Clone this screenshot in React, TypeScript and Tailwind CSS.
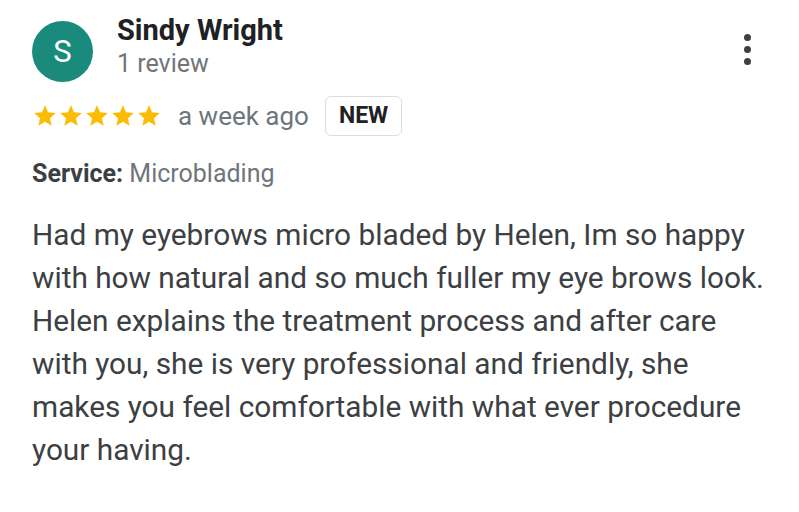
import React from 'react';

const Star: React.FC = () => (
  <svg viewBox="0 0 24 24" className="w-[26px] h-[26px]" fill="#fbbc04">
    <path d="M12 17.27L18.18 21l-1.64-7.03L22 9.24l-7.19-.61L12 2 9.19 8.63 2 9.24l5.46 4.73L5.82 21z" />
  </svg>
);

export default function App() {
  return (
    <div className="w-[799px] h-[512px] bg-white font-['Roboto',sans-serif] px-[32px] pt-[12px]">
      <div className="flex items-start">
        <div className="w-[61px] h-[61px] mt-[9px] rounded-full bg-[#1a8a7c] flex items-center justify-center text-white text-[31px] leading-none">
          S
        </div>
        <div className="ml-[24px] flex-1">
          <div className="text-[29px] font-bold text-[#202124] leading-[36px]">Sindy Wright</div>
          <div className="text-[25px] text-[#70757a] leading-[32px]">1 review</div>
        </div>
        <div className="flex flex-col gap-[5px] mt-[22px] mr-[16px]">
          <span className="w-[7px] h-[7px] rounded-full bg-[#3c4043]" />
          <span className="w-[7px] h-[7px] rounded-full bg-[#3c4043]" />
          <span className="w-[7px] h-[7px] rounded-full bg-[#3c4043]" />
        </div>
      </div>

      <div className="flex items-center mt-[14px]">
        <div className="flex">
          <Star /><Star /><Star /><Star /><Star />
        </div>
        <span className="ml-[16px] text-[26px] text-[#70757a]">a week ago</span>
        <span className="ml-[16px] border border-[#dadce0] rounded-[6px] px-[13px] h-[40px] flex items-center text-[23px] font-bold text-[#202124]">
          NEW
        </span>
      </div>

      <div className="mt-[22px] text-[25px] leading-[32px]">
        <span className="font-bold text-[#3c4043]">Service: </span>
        <span className="text-[#70757a]">Microblading</span>
      </div>

      <p className="mt-[23px] text-[29.8px] leading-[43px] text-[#3c4043] w-[745px]">
        Had my eyebrows micro bladed by Helen, Im so happy with how natural and so much fuller my eye brows look. Helen explains the treatment process and after care with you, she is very professional and friendly, she makes you feel comfortable with what ever procedure your having.
      </p>
    </div>
  );
}
